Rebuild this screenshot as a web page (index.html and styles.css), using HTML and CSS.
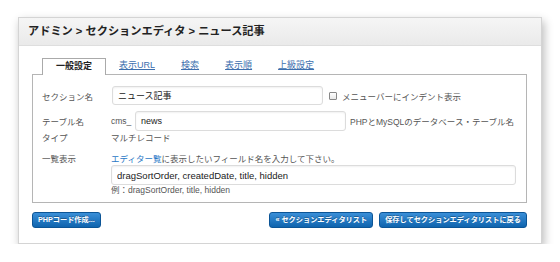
FILE: index.html
```html
<!DOCTYPE html>
<html>
<head>
	<title>セクションエディタ</title>
	<meta name="viewport" content="width=device-width, initial-scale=1" />
	<link rel="stylesheet" href="styles.css">
</head>
<body>
	<div class="card">
		<div class="card-head">アドミン &gt; セクションエディタ &gt; ニュース記事</div>
		<div class="card-body">
			<div class="tabs">
				<span class="tab tab-active">一般設定</span>
				<a class="tab" href="#">表示URL</a>
				<a class="tab" href="#">検索</a>
				<a class="tab" href="#">表示順</a>
				<a class="tab" href="#">上級設定</a>
			</div>
			<div class="panel">
				<div class="row row-name">
					<label class="label">セクション名</label>
					<div class="value">
						<input type="text" class="field field-name" value="ニュース記事" />
						<span class="check"></span>
						<span class="note">メニューバーにインデント表示</span>
					</div>
				</div>
				<div class="row row-table">
					<label class="label">テーブル名</label>
					<div class="value">
						<span class="prefix">cms_</span>
						<input type="text" class="field field-table" value="news" />
						<span class="note">PHPとMySQLのデータベース・テーブル名</span>
					</div>
				</div>
				<div class="row row-type">
					<label class="label">タイプ</label>
					<div class="value">マルチレコード</div>
				</div>
				<div class="row row-list">
					<label class="label">一覧表示</label>
					<div class="value value-stack">
						<div class="hint"><a href="#" class="link">エディター覧</a>に表示したいフィールド名を入力して下さい。</div>
						<input type="text" class="field field-list" value="dragSortOrder, createdDate, title, hidden" />
						<div class="hint">例：dragSortOrder, title, hidden</div>
					</div>
				</div>
			</div>
			<div class="actions">
				<button class="button">PHPコード作成...</button>
				<div class="actions-right">
					<button class="button">« セクションエディタリスト</button>
					<button class="button">保存してセクションエディタリストに戻る</button>
				</div>
			</div>
		</div>
	</div>
</body>
</html>
```
FILE: styles.css
```css
body {
	margin: 0;
	background-color: #FFFFFF;
	font-family: "Liberation Sans", "Noto Sans CJK JP", sans-serif;
	color: #555555;
	font-size: 8.5px;
}

.card {
	margin: 17px 0 0 18px;
	width: 524px;
	height: 227px;
	box-sizing: border-box;
	border: 1px solid #d4d4d4;
	background-color: #FFFFFF;
	box-shadow: 2px 4px 9px rgba(0, 0, 0, 0.28);
}

.card-head {
	height: 27px;
	line-height: 27px;
	padding-left: 9px;
	border-bottom: 1px solid #dedede;
	background: linear-gradient(#f5f5f5, #eaeaea);
	font-size: 11.2px;
	font-weight: bold;
	color: #222222;
}

.card-body {
	padding: 12px 14px 0 13px;
}

.tabs {
	display: flex;
	padding-left: 10px;
	height: 16px;
}

.tab {
	padding: 0 13px;
	line-height: 15px;
	font-size: 9px;
	color: #3d6fae;
	text-decoration: underline;
}

.tab-active {
	border: 1px solid #aaaaaa;
	border-bottom: none;
	background-color: #FFFFFF;
	color: #222222;
	font-weight: bold;
	text-decoration: none;
	height: 16px;
	position: relative;
	z-index: 1;
}

.panel {
	border: 1px solid #b5b5b5;
	padding: 11px 10px 7px 9px;
	height: 129px;
	box-sizing: border-box;
}

.row {
	display: flex;
	align-items: center;
}

.label {
	width: 69px;
	flex-shrink: 0;
	color: #555555;
}

.value {
	display: flex;
	align-items: center;
	color: #555555;
}

.row-table {
	margin-top: 6px;
}

.row-type {
	margin-top: 1px;
	line-height: 12px;
}

.row-list {
	margin-top: 10px;
	align-items: flex-start;
}

.row-list .label {
	line-height: 11px;
}

.value-stack {
	flex-direction: column;
	align-items: flex-start;
}

.hint {
	line-height: 11px;
}

.link {
	color: #2a78c6;
	text-decoration: none;
}

.field {
	box-sizing: border-box;
	border: 1px solid #dcdcdc;
	border-radius: 3px;
	box-shadow: inset 0 1px 2px rgba(0, 0, 0, 0.06);
	padding: 0 5px;
	font-family: "Liberation Sans", "Noto Sans CJK JP", sans-serif;
	font-size: 9px;
	color: #222222;
	background-color: #FFFFFF;
	margin: 0;
}

.field-name {
	width: 211px;
	height: 19px;
	margin-left: 1px;
}

.field-table {
	width: 211px;
	height: 20px;
}

.field-list {
	width: 405px;
	height: 20px;
	font-size: 9.5px;
}

.prefix {
	width: 24px;
}

.check {
	width: 6px;
	height: 6px;
	border: 1px solid #888888;
	border-radius: 1px;
	margin: 0 5px 0 6px;
	background: linear-gradient(#ffffff, #e8e8e8);
}

.row-table .note {
	margin-left: 4px;
}

.actions {
	display: flex;
	justify-content: space-between;
	margin-top: 9px;
}

.actions-right {
	display: flex;
	gap: 6px;
}

.button {
	height: 16px;
	padding: 0 5px;
	border: 1px solid #0c5596;
	border-radius: 3px;
	background: linear-gradient(#3a8fd8, #0f64ae);
	color: #FFFFFF;
	font-family: "Liberation Sans", "Noto Sans CJK JP", sans-serif;
	font-size: 7.2px;
	font-weight: bold;
	line-height: 14px;
	text-shadow: 0 -1px 0 rgba(0, 0, 0, 0.3);
}
```
